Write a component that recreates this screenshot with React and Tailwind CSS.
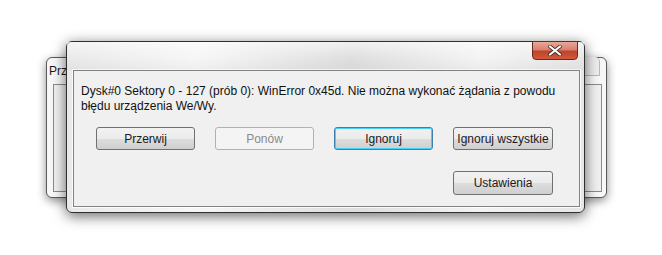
import React from 'react';

const font = { fontFamily: '"Segoe UI", "Liberation Sans", Arial, sans-serif' };

const Button = ({ children, variant = 'normal', className = '' }) => {
  const styles = {
    normal:
      'border-[#707070] bg-[linear-gradient(to_bottom,#f2f2f2_0%,#ebebeb_50%,#dddddd_51%,#cfcfcf_100%)] text-[#1a1a1a]',
    disabled: 'border-[#adb2b5] bg-[#f4f4f4] text-[#8a8a8a]',
    focused:
      'border-[#3c7fb1] bg-[linear-gradient(to_bottom,#f2f2f2_0%,#ebebeb_50%,#dddddd_51%,#cfcfcf_100%)] text-[#1a1a1a] shadow-[inset_0_0_0_1px_#48d1f8]',
  };
  return (
    <div
      className={`flex h-[23px] w-[99px] items-center justify-center rounded-[3px] border text-[12px] leading-none ${styles[variant]} ${className}`}
    >
      {children}
    </div>
  );
};

const App = () => {
  return (
    <div className="relative h-[255px] w-[662px] overflow-hidden bg-white" style={font}>
      {/* Back window */}
      <div className="absolute left-[46px] top-[57px] h-[141px] w-[561px] rounded-[6px] border border-[#5a5a5a] bg-[#f7f7f7] shadow-[0_3px_10px_rgba(0,0,0,0.45)]">
        <div className="absolute right-[6px] top-[-1px] h-[19px] w-[20px] rounded-tr-[5px] border-b border-r border-[#b8b8b8] bg-[#ededed]" />
        <div className="px-[2px] pt-[6px] text-[12px] leading-[15px] text-[#1a1a1a]">Przywracanie</div>
        <div className="absolute bottom-[5px] left-[6px] right-[4px] top-[26px] border border-[#8a8a8a] bg-[#f0f0f0]" />
      </div>

      {/* Front dialog */}
      <div className="absolute left-[66px] top-[41px] flex h-[172px] w-[519px] flex-col rounded-[6px] border border-[#2f2f2f] bg-[linear-gradient(90deg,#e9e9e9_0%,#f6f6f6_25%,#dedede_55%,#f3f3f3_80%,#e6e6e6_100%)] shadow-[0_3px_14px_rgba(0,0,0,0.6)]">
        <div className="relative h-[28px] shrink-0 bg-[linear-gradient(to_bottom,rgba(255,255,255,0.55),rgba(255,255,255,0)_60%,rgba(0,0,0,0.03))]">
          <div className="absolute right-[6px] top-[-1px] flex h-[19px] w-[46px] items-center justify-center rounded-b-[4px] border border-[#6b2a20] bg-[linear-gradient(to_bottom,#e8a898_0%,#d9806e_45%,#c0422b_55%,#cf5a3e_100%)]">
            <svg width="14" height="11" viewBox="0 0 14 11">
              <path
                d="M2 1.5 L12 9.5 M12 1.5 L2 9.5"
                stroke="#3a2a28"
                strokeWidth="3.6"
                strokeLinecap="round"
              />
              <path
                d="M2 1.5 L12 9.5 M12 1.5 L2 9.5"
                stroke="#ffffff"
                strokeWidth="2.2"
                strokeLinecap="round"
              />
            </svg>
          </div>
        </div>
        <div className="mb-[5px] ml-[6px] mr-[4px] flex flex-1 flex-col border border-[#838383] bg-[#f0f0f0] shadow-[0_0_0_1px_rgba(255,255,255,0.8)]">
          <p className="pl-[7px] pr-[10px] pt-[13px] text-[12px] leading-[15px] text-[#111]">
            Dysk#0 Sektory 0 - 127 (prób 0): WinError 0x45d. Nie można wykonać żądania z powodu błędu urządzenia We/Wy.
          </p>
          <div className="mt-[13px] flex gap-[20px] pl-[22px]">
            <Button>Przerwij</Button>
            <Button variant="disabled">Ponów</Button>
            <Button variant="focused">Ignoruj</Button>
            <Button className="w-[100px]">Ignoruj wszystkie</Button>
          </div>
          <div className="mt-[21px] flex justify-end pr-[26px]">
            <Button className="h-[24px] w-[100px]">Ustawienia</Button>
          </div>
        </div>
      </div>
    </div>
  );
};

export default App;
